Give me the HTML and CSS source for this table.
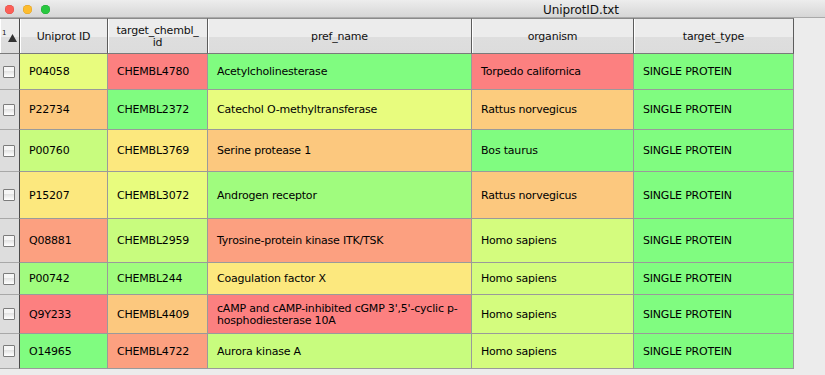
FILE: index.html
```html
<!DOCTYPE html>
<html>
<head>
<meta charset="utf-8">
<link rel="stylesheet" href="styles.css">
</head>
<body>
<div class="window">
  <div class="titlebar">
    <div class="lights">
      <span class="light red"></span>
      <span class="light yellow"></span>
      <span class="light green"></span>
    </div>
    <div class="title">UniprotID.txt</div>
  </div>
  <div class="content">
    <div class="grid">
      <div class="hd corner">
        <span class="sortnum">1</span>
        <svg class="sorttri" width="9" height="8" viewBox="0 0 9 8"><polygon points="4.5,0 9,8 0,8" fill="#333"/></svg>
      </div>
      <div class="hd">Uniprot ID</div>
      <div class="hd">target_chembl_<br>id</div>
      <div class="hd">pref_name</div>
      <div class="hd">organism</div>
      <div class="hd">target_type</div>

      <div class="rh"><span class="cb"></span></div>
      <div class="c yg">P04058</div>
      <div class="c r">CHEMBL4780</div>
      <div class="c g">Acetylcholinesterase</div>
      <div class="c r">Torpedo californica</div>
      <div class="c g">SINGLE PROTEIN</div>

      <div class="rh"><span class="cb"></span></div>
      <div class="c o">P22734</div>
      <div class="c g">CHEMBL2372</div>
      <div class="c yg">Catechol O-methyltransferase</div>
      <div class="c o2">Rattus norvegicus</div>
      <div class="c g">SINGLE PROTEIN</div>

      <div class="rh"><span class="cb"></span></div>
      <div class="c lg">P00760</div>
      <div class="c y">CHEMBL3769</div>
      <div class="c o">Serine protease 1</div>
      <div class="c g">Bos taurus</div>
      <div class="c g">SINGLE PROTEIN</div>

      <div class="rh"><span class="cb"></span></div>
      <div class="c y">P15207</div>
      <div class="c yg">CHEMBL3072</div>
      <div class="c g2">Androgen receptor</div>
      <div class="c o">Rattus norvegicus</div>
      <div class="c g">SINGLE PROTEIN</div>

      <div class="rh"><span class="cb"></span></div>
      <div class="c s">Q08881</div>
      <div class="c lg">CHEMBL2959</div>
      <div class="c s">Tyrosine-protein kinase ITK/TSK</div>
      <div class="c hs">Homo sapiens</div>
      <div class="c g">SINGLE PROTEIN</div>

      <div class="rh"><span class="cb"></span></div>
      <div class="c g2">P00742</div>
      <div class="c g2">CHEMBL244</div>
      <div class="c y">Coagulation factor X</div>
      <div class="c hs">Homo sapiens</div>
      <div class="c g">SINGLE PROTEIN</div>

      <div class="rh"><span class="cb"></span></div>
      <div class="c r">Q9Y233</div>
      <div class="c o">CHEMBL4409</div>
      <div class="c r">cAMP and cAMP-inhibited cGMP 3',5'-cyclic p-<br>hosphodiesterase 10A</div>
      <div class="c hs">Homo sapiens</div>
      <div class="c g">SINGLE PROTEIN</div>

      <div class="rh"><span class="cb"></span></div>
      <div class="c g">O14965</div>
      <div class="c s">CHEMBL4722</div>
      <div class="c lg">Aurora kinase A</div>
      <div class="c hs">Homo sapiens</div>
      <div class="c g">SINGLE PROTEIN</div>
    </div>
  </div>
</div>
</body>
</html>
```

FILE: styles.css
```css
html, body {
  margin: 0;
  padding: 0;
  background: #ececec;
}

body {
  width: 825px;
  height: 375px;
  overflow: hidden;
  font-family: "DejaVu Sans", Verdana, sans-serif;
  font-size: 11px;
  color: #000;
}

.window {
  display: flex;
  flex-direction: column;
  height: 375px;
}

.titlebar {
  height: 17px;
  border-bottom: 1px solid #a9a9a9;
  background: linear-gradient(#ededed, #d6d6d6);
  display: flex;
  align-items: center;
}

.lights {
  display: flex;
  gap: 9px;
  padding-left: 5px;
  padding-top: 2px;
}

.light {
  width: 9px;
  height: 9px;
  border-radius: 50%;
  display: block;
}

.light.red { background: #fc5f57; box-shadow: inset 0 0 0 0.5px #de4a42; }
.light.yellow { background: #fdbc2e; box-shadow: inset 0 0 0 0.5px #dd9e22; }
.light.green { background: #28c840; box-shadow: inset 0 0 0 0.5px #1ea931; }

.title {
  margin-left: 493px;
  padding-top: 2px;
  font-size: 12px;
  color: #111;
  letter-spacing: -0.1px;
}

.content {
  flex: 1;
  background: #ececec;
}

.grid {
  display: grid;
  width: 794px;
  grid-template-columns: 20px 88px 100px 264px 162px 160px;
  grid-template-rows: 36px 36px 40px 42px 47px 44px 32px 39px 35px;
}

.grid > div {
  box-sizing: border-box;
  border-right: 1px solid #9a9a9a;
  border-bottom: 1px solid #9a9a9a;
}

.hd {
  border-top: 1px solid #8a8a8a;
  border-right-color: #5c5c5c !important;
  border-bottom-color: #7a7a7a !important;
  background: linear-gradient(#ececec 0%, #ececec 52%, #dedede 53%, #dcdcdc 100%);
  box-shadow: inset 1px 0 0 #ffffff;
  display: flex;
  align-items: center;
  justify-content: center;
  text-align: center;
  line-height: 12px;
  padding-top: 1px;
  color: #111;
  letter-spacing: -0.2px;
}

.corner {
  position: relative;
  border-right-color: #4a4a4a !important;
}

.sortnum {
  position: absolute;
  left: 2px;
  top: 11px;
  font-size: 7px;
  line-height: 7px;
}

.sorttri {
  position: absolute;
  left: 8px;
  top: 15px;
}

.rh {
  background: #dddddd;
  border-right-color: #4a4a4a !important;
  border-bottom-color: #a8a8a8 !important;
  display: flex;
  align-items: center;
  padding-left: 3px;
}

.cb {
  display: block;
  width: 12px;
  height: 12px;
  box-sizing: border-box;
  border: 1px solid #7c7c7c;
  background: linear-gradient(#f6f6f6 0%, #f6f6f6 40%, #e2e2e2 41%, #ffffff 100%);
  border-radius: 1px;
}

.c {
  display: flex;
  align-items: center;
  padding-left: 9px;
  padding-top: 1px;
  line-height: 12px;
  letter-spacing: -0.2px;
  color: #000;
}

.r { background: #fc8080; }
.s { background: #fca080; }
.o { background: #fcc87e; }
.o2 { background: #fccc7e; }
.y { background: #fce87e; }
.yg { background: #e8fc7e; }
.lg { background: #c8fc7e; }
.hs { background: #d4fc7e; }
.g2 { background: #a0fc7e; }
.g { background: #80fc80; }
```
